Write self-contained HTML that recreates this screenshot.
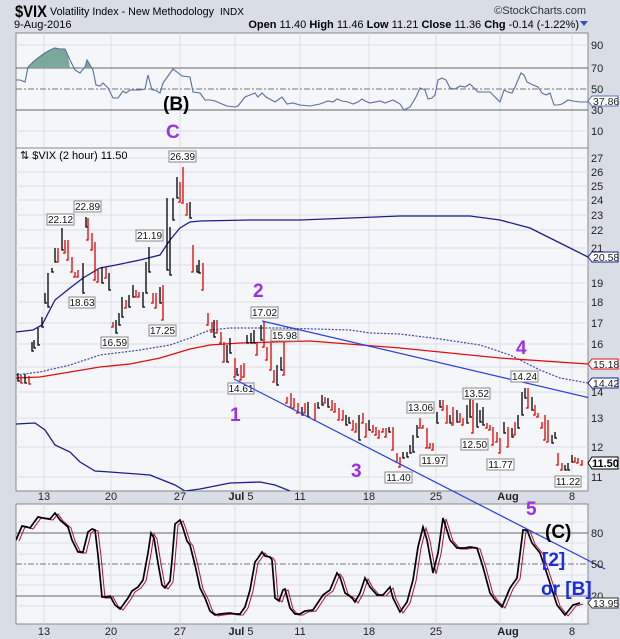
<!DOCTYPE html>
<html><head><meta charset="utf-8"><style>
html,body{margin:0;padding:0;background:#d9dee6;}
svg{display:block;font-family:"Liberation Sans",sans-serif;}
</style></head><body>
<svg width="620" height="639" viewBox="0 0 620 639" xmlns="http://www.w3.org/2000/svg">
<defs>
<clipPath id="cp"><rect x="16" y="148" width="572" height="343"/></clipPath>
<clipPath id="cr"><rect x="16" y="33" width="572" height="115"/></clipPath>
<clipPath id="cb"><rect x="16" y="504" width="572" height="120"/></clipPath>
</defs>
<rect width="620" height="639" fill="#d9dee6"/>
<!-- header -->
<text x="15" y="17" font-size="17" font-weight="bold" fill="#000" textLength="32" lengthAdjust="spacingAndGlyphs">$VIX</text>
<text x="50" y="15" font-size="11" fill="#000" textLength="164" lengthAdjust="spacingAndGlyphs">Volatility Index - New Methodology</text>
<text x="220" y="15" font-size="10" fill="#000">INDX</text>
<text x="14" y="28" font-size="11" fill="#000">9-Aug-2016</text>
<text x="586" y="14" font-size="11" fill="#333" text-anchor="end">©StockCharts.com</text>
<text x="579" y="28" font-size="11" fill="#000" text-anchor="end"><tspan font-weight="bold">Open</tspan> 11.40 <tspan font-weight="bold">High</tspan> 11.46 <tspan font-weight="bold">Low</tspan> 11.21 <tspan font-weight="bold">Close</tspan> 11.36 <tspan font-weight="bold">Chg</tspan> -0.14 (-1.22%)</text>
<path d="M580 21h8l-4 5z" fill="#3355aa"/>

<!-- RSI panel -->
<rect x="16" y="33" width="572" height="115" fill="#f4f6fa" stroke="#888" stroke-width="1"/>
<g stroke="#dcdfe6" stroke-width="1">
<path d="M44 33V148M111 33V148M180 33V148M235 33V148M300 33V148M369 33V148M436 33V148M500 33V148M572 33V148"/>
<path d="M16 45H588M16 131H588"/>
</g>
<path d="M16 68H588M16 110H588" stroke="#666" stroke-width="1"/>
<path d="M16 89H588" stroke="#777" stroke-dasharray="6,2,2,2" stroke-width="1"/>
<g clip-path="url(#cr)">
<path d="M28 68L33 62L38 58L45 53L50 50L55 48L60 49L65 49L68 56L70 68Z" fill="#7aa89a" stroke="none"/>
<path d="M80 68L85 67L87 60L90 65L92 68Z" fill="#7aa89a"/>
<polyline fill="none" stroke="#5870a0" stroke-width="1.1" points="16,80 20,80 25,82 28,67 33,62 38,58 45,53 50,50 55,48 60,49 65,49 70,60 75,70 80,73 85,67 87,60 90,65 93,70 96,85 100,86 103,83 108,88 113,98 118,98 123,91 126,93 130,90 135,90 140,90 145,89 148,75 152,90 155,90 160,93 163,83 168,76 173,69 177,72 182,76 190,77 193,92 200,93 205,100 210,100 215,101 222,104 227,106 235,107 238,106 245,97 250,95 255,93 258,97 262,93 266,97 275,102 282,97 287,104 293,103 300,105 310,106 320,104 328,101 333,102 337,99 342,101 348,102 353,104 358,102 362,99 365,101 370,103 380,101 385,103 393,100 400,104 404,110 410,107 416,97 420,88 425,90 428,99 432,98 435,95 438,80 442,78 446,80 450,88 455,89 460,86 465,87 470,84 474,88 478,92 485,92 490,92 495,97 500,102 504,90 508,92 512,93 515,87 518,80 521,73 524,75 527,82 533,85 538,87 542,93 546,95 550,93 554,105 558,105 562,104 568,100 573,101 580,102 588,102"/>
</g>
<g font-size="11" fill="#222">
<text x="591" y="49">90</text><text x="591" y="72">70</text><text x="591" y="93">50</text><text x="591" y="114">30</text><text x="591" y="135">10</text>
</g>
<path d="M588 101l4-5h26v10h-26z" fill="#fff" stroke="#5870a0"/>
<text x="593" y="105" font-size="10.5" fill="#222">37.86</text>
<text x="163" y="110" font-size="19" font-weight="bold" fill="#000">(B)</text>
<text x="166" y="138" font-size="19" font-weight="bold" fill="#9b30e8">C</text>

<!-- Price panel -->
<rect x="16" y="148" width="572" height="343" fill="#f4f6fa" stroke="#888"/>
<g stroke="#dcdfe6" stroke-width="1">
<path d="M44 148V491M111 148V491M180 148V491M235 148V491M300 148V491M369 148V491M436 148V491M500 148V491M572 148V491"/>
<path d="M16 158H588M16 172H588M16 186H588M16 200H588M16 215H588M16 230H588M16 248H588M16 265H588M16 283H588M16 302H588M16 323H588M16 344H588M16 367H588M16 392H588M16 418H588M16 447H588M16 477H588"/>
</g>
<g clip-path="url(#cp)" fill="none">
<polyline stroke="#1a1f8c" stroke-width="1.3" points="16,332 33,330 42,325 55,300 70,288 83,278 100,268 116,265 140,260 160,255 170,240 180,228 190,222 200,221 250,220 300,220 400,216 470,216 500,220 530,228 560,243 588,257"/>
<polyline stroke="#1a1f8c" stroke-width="1.3" points="16,424 35,423 45,430 55,445 70,452 80,462 95,471 110,472 150,475 175,485 185,491 200,489 230,483 260,482 275,485 290,491"/>
<polyline stroke="#3a48b0" stroke-width="1.2" stroke-dasharray="2,1.5" points="16,375 40,372 70,365 100,355 140,350 170,345 190,338 210,330 230,328 280,328 350,330 370,333 400,334 440,339 480,345 510,355 540,370 560,378 588,383"/>
<polyline stroke="#e01010" stroke-width="1.3" points="16,378 40,377 70,372 100,367 130,364 160,358 190,349 210,345 240,343 310,341 400,348 500,358 588,364"/>
<path d="M262 321L620 405" stroke="#2840e0" stroke-width="1.2"/>
<path stroke="#000" stroke-width="1.3" d="M18 373V381h2M25 374V383h2M32 342V351h2M34 340V348h2M38 328V345h2M42 317V327h2M45 293V303h2M48 273V307h2M52 268V272h2M55 248V262h2M62 228V250h2M83 263V293h2M86 217V227h2M102 267V283h2M109 273V290h2M116 320V333h2M119 313V325h2M122 297V317h2M129 295V307h2M133 285V297h2M143 292V307h2M146 262V293h2M149 247V272h2M160 287V303h2M167 198V270h2M170 227V275h2M173 198V220h2M177 177V198h2M190 202V218h2M197 265V272h2M199 260V273h2M214 320V337h2M227 345V362h2M230 338V353h2M237 368V375h2M247 335V343h2M251 333V343h2M254 330V343h2M261 325V340h2M277 365V385h2M281 357V370h2M302 407V415h2M308 402V417h2M318 402V408h2M322 395V405h2M328 398V407h2M346 415V425h2M349 417V423h2M359 415V440h2M369 420V430h2M389 427V432h2M403 452V458h2M407 452V457h2M410 445V453h2M413 435V452h2M417 425V437h2M437 412V423h2M440 400V407h2M450 415V423h2M457 410V422h2M467 405V423h2M470 398V417h2M477 403V427h2M480 410V422h2M483 407V425h2M504 422V433h2M512 428V437h2M518 415V428h2M522 392V415h2M525 388V398h2M532 397V410h2M552 435V443h2M555 432V438h2M565 465V470h2M568 463V470h2M572 455V462h2"/>
<path stroke="#e00000" stroke-width="1.3" d="M21 375V383h2M29 376V384h2M58 248V262h-2M65 240V253h-2M68 240V260h-2M72 257V272h-2M75 272V277h-2M78 270V277h-2M88 218V240h-2M92 233V250h-2M95 242V280h-2M98 270V282h-2M106 267V278h-2M113 322V327h-2M126 300V308h-2M136 290V297h-2M139 292V297h-2M153 293V303h-2M156 293V308h-2M163 285V320h-2M180 182V202h-2M183 167V203h-2M187 203V215h-2M193 245V272h-2M203 263V290h-2M208 313V325h-2M212 322V332h-2M217 320V333h-2M221 332V343h-2M224 342V362h-2M235 358V377h-2M241 365V380h-2M244 363V377h-2M257 342V355h-2M264 322V347h-2M267 347V360h-2M271 343V370h-2M274 370V382h-2M284 342V375h-2M287 397V403h-2M291 393V407h-2M294 398V408h-2M298 403V413h-2M305 403V413h-2M315 403V420h-2M325 397V403h-2M332 400V410h-2M335 403V412h-2M339 408V420h-2M343 410V420h-2M353 420V430h-2M356 423V432h-2M363 413V423h-2M366 423V437h-2M373 425V432h-2M376 427V435h-2M379 430V438h-2M383 428V432h-2M386 428V437h-2M393 427V450h-2M397 453V462h-2M400 457V467h-2M420 418V428h-2M423 425V428h-2M427 428V448h-2M430 443V448h-2M433 443V450h-2M443 400V410h-2M447 405V423h-2M453 407V425h-2M460 413V422h-2M463 418V425h-2M473 400V433h-2M487 423V428h-2M490 425V430h-2M493 427V445h-2M497 432V442h-2M500 438V453h-2M508 427V447h-2M515 422V435h-2M528 388V408h-2M535 405V415h-2M538 413V417h-2M542 422V428h-2M545 415V440h-2M548 420V442h-2M558 453V465h-2M562 463V470h-2M575 457V462h-2M578 458V463h-2M582 460V465h-2"/>
</g>
<!-- value labels -->
<g font-size="10" fill="#111" text-anchor="middle">
<g fill="#fff" stroke="#888" stroke-width="1">
<rect x="47" y="214" width="27" height="11"/><rect x="74" y="201" width="27" height="11"/><rect x="69" y="297" width="26" height="11"/>
<rect x="136" y="230" width="27" height="11"/><rect x="101" y="337" width="27" height="11"/><rect x="149" y="325" width="27" height="11"/>
<rect x="169" y="151" width="27" height="11"/><rect x="251" y="307" width="27" height="11"/><rect x="271" y="330" width="27" height="11"/>
<rect x="228" y="383" width="26" height="11"/><rect x="407" y="402" width="27" height="11"/><rect x="385" y="472" width="27" height="11"/>
<rect x="420" y="455" width="27" height="11"/><rect x="463" y="388" width="27" height="11"/><rect x="461" y="439" width="27" height="11"/>
<rect x="487" y="459" width="27" height="11"/><rect x="511" y="371" width="27" height="11"/><rect x="555" y="476" width="26" height="11"/>
</g>
<text x="60.5" y="223">22.12</text><text x="87.5" y="210">22.89</text><text x="82" y="306">18.63</text>
<text x="149.5" y="239">21.19</text><text x="114.5" y="346">16.59</text><text x="162.5" y="334">17.25</text>
<text x="182.5" y="160">26.39</text><text x="264.5" y="316">17.02</text><text x="284.5" y="339">15.98</text>
<text x="241" y="392">14.61</text><text x="420.5" y="411">13.06</text><text x="398.5" y="481">11.40</text>
<text x="433.5" y="464">11.97</text><text x="476.5" y="397">13.52</text><text x="474.5" y="448">12.50</text>
<text x="500.5" y="468">11.77</text><text x="524.5" y="380">14.24</text><text x="568" y="485">11.22</text>
</g>
<text x="20" y="159" font-size="11" fill="#000">⇅ $VIX (2 hour) 11.50</text>
<g font-size="11" fill="#222">
<text x="591" y="162">27</text><text x="591" y="176">26</text><text x="591" y="190">25</text><text x="591" y="204">24</text><text x="591" y="219">23</text><text x="591" y="234">22</text><text x="591" y="252">21</text><text x="591" y="287">19</text><text x="591" y="306">18</text><text x="591" y="327">17</text><text x="591" y="348">16</text><text x="591" y="396">14</text><text x="591" y="422">13</text><text x="591" y="451">12</text><text x="591" y="481">11</text>
</g>
<path d="M588 257l4-5h26v10h-26z" fill="#fff" stroke="#1a1f8c"/><text x="593" y="261" font-size="10.5" fill="#222">20.58</text>
<path d="M588 364l4-5h26v10h-26z" fill="#fff" stroke="#e01010"/><text x="593" y="368" font-size="10.5" fill="#222">15.18</text>
<path d="M588 383l4-5h26v10h-26z" fill="#fff" stroke="#1a1f8c"/><text x="593" y="387" font-size="10.5" fill="#222">14.42</text>
<path d="M588 463l4-6h26v12h-26z" fill="#fff" stroke="#000"/><text x="592" y="467" font-size="11" font-weight="bold" fill="#000">11.50</text>
<g font-size="19" font-weight="bold" fill="#9b30e8">
<text x="253" y="297">2</text><text x="230" y="421">1</text><text x="351" y="477">3</text><text x="516" y="354">4</text>
</g>
<g font-size="11" fill="#222" text-anchor="middle">
<text x="44" y="500">13</text><text x="111" y="500">20</text><text x="180" y="500">27</text><text x="241" y="500"><tspan font-weight="bold">Jul</tspan> 5</text><text x="300" y="500">11</text><text x="369" y="500">18</text><text x="436" y="500">25</text><text x="508" y="500" font-weight="bold">Aug</text><text x="572" y="500">8</text>
</g>

<!-- Bottom panel -->
<rect x="16" y="504" width="572" height="120" fill="#f4f6fa" stroke="#888"/>
<g stroke="#dcdfe6" stroke-width="1">
<path d="M44 504V624M111 504V624M180 504V624M235 504V624M300 504V624M369 504V624M436 504V624M500 504V624M572 504V624"/>
<path d="M16 522H588M16 543H588M16 554H588M16 575H588M16 585H588M16 606H588"/>
</g>
<path d="M16 533H588M16 596H588" stroke="#666"/>
<path d="M16 564H588" stroke="#777" stroke-dasharray="6,2,2,2"/>
<g clip-path="url(#cb)" fill="none">
<polyline stroke="#b01040" stroke-width="1" transform="translate(3,1)" points="16,540 22,526 27,527 30,528 38,517 43,518 50,519 55,513 60,520 68,527 72,540 78,552 83,552 88,532 92,529 95,530 98,555 102,597 106,597 110,596 115,605 120,609 123,605 128,598 132,591 138,587 143,580 148,553 151,533 154,538 158,563 162,585 165,588 170,581 172,560 175,524 180,520 183,528 187,541 190,545 195,565 200,588 205,598 210,611 215,615 220,614 230,613 235,614 240,614 245,607 250,590 255,562 258,558 262,552 265,556 270,557 272,560 275,598 279,601 283,590 285,589 290,608 295,614 300,614 305,611 313,610 323,595 330,590 337,573 340,577 345,593 348,595 352,598 355,602 360,593 365,578 370,587 377,595 383,595 390,587 393,598 400,612 407,602 413,580 418,547 423,527 427,540 433,573 438,553 443,518 450,540 457,548 465,548 470,547 477,548 483,567 490,593 495,600 502,607 510,588 517,578 523,530 527,530 532,543 540,553 548,577 557,605 565,615 573,605 580,603"/>
<polyline stroke="#000" stroke-width="1.7" points="16,540 22,526 27,527 30,528 38,517 43,518 50,519 55,513 60,520 68,527 72,540 78,552 83,552 88,532 92,529 95,530 98,555 102,597 106,597 110,596 115,605 120,609 123,605 128,598 132,591 138,587 143,580 148,553 151,533 154,538 158,563 162,585 165,588 170,581 172,560 175,524 180,520 183,528 187,541 190,545 195,565 200,588 205,598 210,611 215,615 220,614 230,613 235,614 240,614 245,607 250,590 255,562 258,558 262,552 265,556 270,557 272,560 275,598 279,601 283,590 285,589 290,608 295,614 300,614 305,611 313,610 323,595 330,590 337,573 340,577 345,593 348,595 352,598 355,602 360,593 365,578 370,587 377,595 383,595 390,587 393,598 400,612 407,602 413,580 418,547 423,527 427,540 433,573 438,553 443,518 450,540 457,548 465,548 470,547 477,548 483,567 490,593 495,600 502,607 510,588 517,578 523,530 527,530 532,543 540,553 548,577 557,605 565,615 573,605 580,603"/>
</g>
<path d="M234 379L605 569" stroke="#2840e0" stroke-width="1.2"/>
<text x="526" y="515" font-size="19" font-weight="bold" fill="#9b30e8">5</text>
<g font-size="11" fill="#222">
<text x="591" y="537">80</text><text x="591" y="568">50</text><text x="591" y="600">20</text>
</g>
<path d="M588 603l4-5h26v10h-26z" fill="#fff" stroke="#333"/><text x="593" y="607" font-size="10.5" fill="#222">13.95</text>
<text x="545" y="538" font-size="19" font-weight="bold" fill="#000">(C)</text>
<text x="542" y="566" font-size="19" font-weight="bold" fill="#1a2ae8">[2]</text>
<text x="541" y="595" font-size="19" font-weight="bold" fill="#1a2ae8">or [B]</text>
<g font-size="11" fill="#222" text-anchor="middle">
<text x="44" y="635">13</text><text x="111" y="635">20</text><text x="180" y="635">27</text><text x="241" y="635"><tspan font-weight="bold">Jul</tspan> 5</text><text x="300" y="635">11</text><text x="369" y="635">18</text><text x="436" y="635">25</text><text x="508" y="635" font-weight="bold">Aug</text><text x="572" y="635">8</text>
</g>
</svg>
</body></html>
